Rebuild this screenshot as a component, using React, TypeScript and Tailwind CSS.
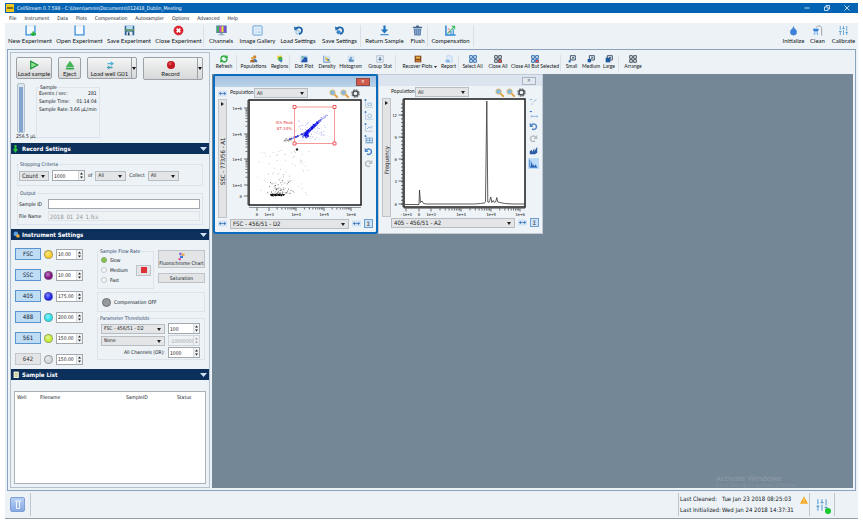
import type { ReactNode } from 'react';
import clsx from 'clsx';
import { Droplet, RefreshCw, SlidersVertical } from 'lucide-react';

const UI = 'font-["DejaVu_Sans_Condensed","DejaVu_Sans",sans-serif]';
const TOOL_FONT = 'font-[Lato,"Open_Sans",sans-serif]';

function Svg({ size = 11, children }: { size?: number; children: ReactNode }) {
  return (
    <svg width={size} height={size} viewBox="0 0 12 12" fill="none" className="shrink-0">
      {children}
    </svg>
  );
}

/* ---------- icons ---------- */

const TrayIcon = ({ plus = false }) => (
  <Svg>
    <rect x="1" y="1" width="10" height="10" fill="#f4faff" stroke="#c3dcf3" strokeWidth=".6" />
    <path d="M1.200 .5v10.300h9.600V.5" stroke="#3f93dc" strokeWidth="1.400" />
    {plus && <path d="M6 9h2V7h2v2h2v2h-2v1H8v-1H6z" fill="#22b03a" />}
  </Svg>
);

const FloppyIcon = () => (
  <Svg>
    <path d="M.8.8h10.400v10.400H.8z" fill="#2a6496" />
    <path d="M2.400.8h7.200v4H2.400z" fill="#b7dcf3" />
    <path d="M.8 5h10.400v1.200H.8z" fill="#7fae4a" />
    <path d="M2.800 7.200h6.400v4H2.800z" fill="#e9eff4" />
    <path d="M4.200 8h1.800v3.200H4.200z" fill="#1c3f5e" />
  </Svg>
);

const CloseCircleIcon = () => (
  <Svg>
    <circle cx="6" cy="6" r="5" fill="#e31f2b" stroke="#b3121c" strokeWidth=".5" />
    <path d="M4 4l4 4M8 4L4 8" stroke="#fff" strokeWidth="1.800" />
  </Svg>
);

const MonitorIcon = () => (
  <Svg>
    <path d="M.3.5h11.400v8.200H.3z" fill="#4c7fae" />
    <path d="M1.200 1.300h2.400v6.600H1.200z" fill="#35b54a" />
    <path d="M3.600 1.300H6v6.600H3.600z" fill="#e03fc8" />
    <path d="M6 1.300h2.400v6.600H6z" fill="#f4dc2c" />
    <path d="M8.400 1.300h2.400v6.600H8.400z" fill="#7d46d8" />
    <path d="M4.800 8.700h2.400v1.300h2v1.200H2.800V10h2z" fill="#8fa6b8" />
  </Svg>
);

const GalleryIcon = () => (
  <Svg>
    <rect x="1" y="1" width="10" height="10" rx="1" fill="#e3effb" stroke="#5d9bd8" />
    <path d="M3.500 3.500h2v2h-2zM6.700 3.500h2v2h-2zM3.500 6.700h2v2h-2z" fill="#c3dcf4" />
    <path d="M6.700 6.700h2v2h-2z" fill="#a2c8ee" />
  </Svg>
);

const SettingsArrowIcon = ({ down = false }) => (
  <Svg>
    <path d="M3 4.500C4.500 1.500 9.500 2 9.800 5.600c.1 2-1.300 3.800-3.300 4.200" stroke="#1f68ad" strokeWidth="2" />
    <path d="M1 1.500l.8 4.800 4.200-2.400z" fill="#1f68ad" />
    <circle cx="5" cy="7.800" r="2" fill={down ? '#2f80c8' : '#dbe9f5'} stroke="#5a96cc" strokeWidth=".6" />
  </Svg>
);

const DownArrowIcon = () => (
  <Svg>
    <path d="M4.800 .5h2.400v4.500h2.800L6 9.300 2 5h2.800z" fill="#1f74c2" />
    <path d="M1.500 9.800h9v1.400h-9z" fill="#4d96d6" />
  </Svg>
);

const BinIcon = () => (
  <Svg>
    <path d="M4.500 .5h3v1.300h-3zM1 1.800h10v1.600H1z" fill="#46658c" />
    <path d="M1.800 3.800h8.400l-.7 7.700H2.500z" fill="#5f83b0" />
    <path d="M4 4.800v5.500M6 4.800v5.500M8 4.800v5.500" stroke="#a9c1de" strokeWidth=".7" />
  </Svg>
);

const CompensationIcon = () => (
  <Svg>
    <path d="M1 .5v10.300h10.500" stroke="#2a86d1" strokeWidth="1.600" />
    <path d="M2.500 9.500L10 2M7.500 1.500h3v3" stroke="#3ebd6a" strokeWidth="1.200" />
    <path d="M6.500 6.500v3.500M9 4.500v5.500" stroke="#2a86d1" strokeWidth="1.200" />
    <path d="M3 4.500h2M4 7.500h1.500" stroke="#e45050" strokeWidth="1" />
  </Svg>
);

const ShowerIcon = () => (
  <Svg>
    <path d="M4.500 3C5.500 .2 10.500 .2 10.500 4v7.500" stroke="#8d9aa6" strokeWidth="1" />
    <path d="M1 4h6.500L6.500 7H2z" fill="#2f7fd8" />
    <path d="M2.500 8v3M4.300 8v2M6 8v3" stroke="#6eaeee" strokeWidth="1" />
  </Svg>
);

const SlidersIcon = ({ size = 11 }) => (
  <SlidersVertical size={size} color="#3d8cc9" strokeWidth={1.600} />
);

const MagnifierIcon = () => (
  <Svg size={9}>
    <path d="M7 7l4 4" stroke="#e0a24a" strokeWidth="2.400" strokeLinecap="round" />
    <circle cx="4.700" cy="4.700" r="3.500" fill="#7fb8e6" stroke="#e6b968" strokeWidth="1.200" />
  </Svg>
);

const GearIcon = () => (
  <Svg size={9}>
    <circle cx="6" cy="6" r="5" stroke="#6b7177" strokeWidth="1.400" strokeDasharray="2.400 1.500" />
    <circle cx="6" cy="6" r="3.400" fill="#f2f5f7" stroke="#4c5157" strokeWidth="2" />
  </Svg>
);

const UndoIcon = ({ redo = false }) => (
  <Svg size={9}>
    <g transform={redo ? 'matrix(-1 0 0 1 12 0)' : undefined}>
      <path d="M3 4.500C5 1.500 10 2.500 10 6.200c0 3-3.500 4.800-6 3" stroke={redo ? '#b4bac0' : '#4a83c6'} strokeWidth="2" />
      <path d="M1 1v5.500h5z" fill={redo ? '#b4bac0' : '#4a83c6'} />
    </g>
  </Svg>
);

const PeopleIcon = () => (
  <Svg size={8}>
    <circle cx="7" cy="3" r="2.500" fill="#c98336" />
    <path d="M3 11c0-4 2-5 4-5s4 1 4 5z" fill="#3b78bd" />
    <circle cx="3.500" cy="5" r="2" fill="#e0a637" />
    <path d="M0 11c0-3 1-4 3.500-4S7 8 7 11z" fill="#b5651f" />
  </Svg>
);

const RegionsIcon = () => (
  <Svg size={8}>
    <path d="M2 1h7v6H2z" fill="#f3d13a" />
    <circle cx="6.500" cy="6" r="3.300" fill="#46ad4c" />
    <path d="M4 8l4 3.500 2-4z" fill="#3d7fd0" />
  </Svg>
);

const DotPlotIcon = () => (
  <Svg size={8}>
    <path d="M1 1h10v10H1z" fill="#a9c9ea" />
    <path d="M1 11L7 3l4 1v7z" fill="#2456b0" />
    <path d="M3 2h2v2H3z" fill="#4aa45a" />
  </Svg>
);

const DensityIcon = () => (
  <Svg size={8}>
    <path d="M1 1h10v10H1z" fill="#cfe2f5" />
    <path d="M1 1v10h10" stroke="#4a79b8" />
    <path d="M3 3l6 3 1 4-5-1z" fill="#f0c22f" />
    <path d="M5 6l4 0 1 4z" fill="#3d88c0" />
  </Svg>
);

const HistogramIcon = () => (
  <Svg size={8}>
    <path d="M1 1h10v10H1z" fill="#cfe0ee" />
    <path d="M3 10V6h2V3h2v4h3v3z" fill="#5d8fc2" />
  </Svg>
);

const StatIcon = () => (
  <Svg size={8}>
    <path d="M1 1h10v10H1z" fill="#e4edf4" stroke="#a2b6c6" />
    <path d="M5 3h2v3h2L6 9 3 6h2z" fill="#5c7c9a" />
  </Svg>
);

const RecoverIcon = () => (
  <Svg size={8}>
    <path d="M1 1h10v10H1z" fill="#8a4b1e" />
    <path d="M3 2.500h6v3H3z" fill="#e9b54a" />
    <path d="M3 7.500h6V10H3z" fill="#c87934" />
  </Svg>
);

const ReportIcon = () => (
  <Svg size={8}>
    <path d="M3 1h6l2 2v8H3z" fill="#dceafa" stroke="#9cc3ea" strokeWidth=".7" />
    <path d="M1 7h6v4H1z" fill="#86b7e8" />
  </Svg>
);

const TilesIcon = ({ color = '#2f6fb4', mark = false }) => (
  <Svg size={8}>
    <path d="M1 1h4v4H1zM7 1h4v4H7zM1 7h4v4H1zM7 7h4v4H7z" stroke={color} strokeWidth="1.500" />
    {mark && <path d="M7 7l4.500 4.500M11.500 7L7 11.500" stroke="#e23434" strokeWidth="1.500" />}
  </Svg>
);

const ResizeIcon = ({ fill = 5 }) => (
  <Svg size={8}>
    <path d="M3.500 1H11v6.500H3.500z" stroke="#27405c" strokeWidth="1.300" />
    <rect x="1" y={11 - fill} width={fill} height={fill} fill="#1f5c9f" />
    <path d="M5 6.500l3.500-3M8.500 5.500v-2H6" stroke="#27405c" />
  </Svg>
);

const AxisToolIcon = ({ kind = 0 }) => (
  <Svg size={9}>
    <path d="M2 4v7h10" stroke="#a9c2dc" strokeWidth="1" />
    <path d="M.5 1.500h3M2 0v3" stroke="#3d82ca" strokeWidth="1.200" />
    {kind === 0 && <path d="M5 5.500h5v3H5z" stroke="#8fb0d2" />}
    {kind === 1 && <circle cx="7.500" cy="6.500" r="2.500" stroke="#8fb0d2" />}
    {kind === 2 && <path d="M4 8l3-3 2 2 2-3" stroke="#6d9fd3" />}
    {kind === 3 && <path d="M3.500 4h8v6h-8zM7.500 4v6M3.500 7h8" stroke="#5d92cb" />}
  </Svg>
);

const ArrowsIcon = () => (
  <svg width="9" height="7" viewBox="0 0 12 8" className="shrink-0">
    <rect width="12" height="8" fill="#d3e3f4" />
    <path d="M1 4l3-2v4zM11 4L8 2v4zM4 3.500h4v1H4z" fill="#3c76bb" />
  </svg>
);

/* ---------- form bits ---------- */

type SelectProps = { label: string; value: string; className?: string; text?: string };

function Select({ label, value, className, text = 'text-[5px]' }: SelectProps) {
  return (
    <div className={clsx('relative h-[10px] shrink-0', className)}>
      <select
        aria-label={label}
        className={clsx('block h-full w-full appearance-none border border-[#b9bdc1] bg-[#e3e5e7] pr-2 pl-[2px] leading-none text-[#222]', text)}
      >
        <option>{value}</option>
      </select>
      <svg width="4" height="3" viewBox="0 0 4 3" className="pointer-events-none absolute top-1 right-1">
        <path d="M0 0h4L2 3z" fill="#222" />
      </svg>
    </div>
  );
}

type SpinProps = { label: string; value: string; className?: string; disabled?: boolean };

function Spin({ label, value, className, disabled }: SpinProps) {
  return (
    <div className={clsx('flex h-[11px] shrink-0 border', disabled ? 'border-[#d0d5d9] bg-[#eef2f4]' : 'border-[#a3a9af] bg-white', className)}>
      <input
        aria-label={label}
        defaultValue={value}
        disabled={disabled}
        className={clsx('w-0 flex-1 pl-[1px] text-[5px] leading-none', disabled ? 'text-[#9ba1a6]' : 'text-[#222]')}
      />
      <button aria-label={`Step ${label}`} className="flex w-[6px] items-center justify-center border-l border-[#d5d8db] bg-[#f0f1f2]">
        <svg width="5" height="7" viewBox="0 0 5 7">
          <path d="M1 2.500h3L2.500 .5zM1 4.500h3L2.500 6.500z" fill={disabled ? '#9ba1a6' : '#222'} />
        </svg>
      </button>
    </div>
  );
}

function Group({ title, className, children }: { title: string; className?: string; children: ReactNode }) {
  return (
    <fieldset className={clsx('min-w-0 border border-[#dde3e8]', className)}>
      <legend className="ml-[1px] px-[1px] text-[5px] leading-[6px] text-[#2b4569]">{title}</legend>
      {children}
    </fieldset>
  );
}

function SectionHeader({ title, icon }: { title: string; icon: ReactNode }) {
  return (
    <h2 className="flex h-[11px] items-center bg-[#0c2f5c] px-[2px] text-white">
      <span className="flex w-[7px] items-center">{icon}</span>
      <span className="ml-[2px] text-[6px] leading-none font-bold">{title}</span>
      <svg width="7" height="4" viewBox="0 0 7 4" className="ml-auto">
        <path d="M0 0h7L3.500 4z" fill="#cfe0f2" />
      </svg>
    </h2>
  );
}

const BEVEL = 'rounded-[2px] border border-[#9ba1a6] bg-linear-to-b from-[#f4f5f5] to-[#d6d8d9] text-[#1c1c1c]';

/* ---------- toolbars ---------- */

type Tool = { label: string; width: string; icon: ReactNode; sep?: boolean; menu?: boolean };

const mainTools: Tool[] = [
  { label: 'New Experiment', width: 'w-[50px]', icon: <TrayIcon plus /> },
  { label: 'Open Experiment', width: 'w-[49px]', icon: <TrayIcon /> },
  { label: 'Save Experiment', width: 'w-[50px]', icon: <FloppyIcon /> },
  { label: 'Close Experiment', width: 'w-[50px]', icon: <CloseCircleIcon />, sep: true },
  { label: 'Channels', width: 'w-[34px]', icon: <MonitorIcon /> },
  { label: 'Image Gallery', width: 'w-[39px]', icon: <GalleryIcon /> },
  { label: 'Load Settings', width: 'w-[42px]', icon: <SettingsArrowIcon /> },
  { label: 'Save Settings', width: 'w-[42px]', icon: <SettingsArrowIcon down />, sep: true },
  { label: 'Return Sample', width: 'w-[47px]', icon: <DownArrowIcon /> },
  { label: 'Flush', width: 'w-[20px]', icon: <BinIcon />, sep: true },
  { label: 'Compensation', width: 'w-[46px]', icon: <CompensationIcon />, sep: true },
];

const sideTools: Tool[] = [
  { label: 'Initialize', width: 'w-[25px]', icon: <Droplet size={11} color="#3d7fcc" fill="#3d82d8" strokeWidth={1} /> },
  { label: 'Clean', width: 'w-[23px]', icon: <ShowerIcon /> },
  { label: 'Calibrate', width: 'w-[29px]', icon: <SlidersIcon /> },
];

const plotTools: Tool[] = [
  { label: 'Refresh', width: 'w-[25px]', icon: <RefreshCw size={8} color="#2fae3e" strokeWidth={4} />, sep: true },
  { label: 'Populations', width: 'w-[33px]', icon: <PeopleIcon /> },
  { label: 'Regions', width: 'w-[20px]', icon: <RegionsIcon />, sep: true },
  { label: 'Dot Plot', width: 'w-[28px]', icon: <DotPlotIcon /> },
  { label: 'Density', width: 'w-[18px]', icon: <DensityIcon /> },
  { label: 'Histogram', width: 'w-[29px]', icon: <HistogramIcon /> },
  { label: 'Group Stat', width: 'w-[31px]', icon: <StatIcon />, sep: true },
  { label: 'Recover Plots', width: 'w-[43px]', icon: <RecoverIcon />, menu: true },
  { label: 'Report', width: 'w-[20px]', icon: <ReportIcon />, sep: true },
  { label: 'Select All', width: 'w-[27px]', icon: <TilesIcon /> },
  { label: 'Close All', width: 'w-[24px]', icon: <TilesIcon color="#4a5561" mark /> },
  { label: 'Close All But Selected', width: 'w-[51px]', icon: <TilesIcon mark />, sep: true },
  { label: 'Small', width: 'w-[21px]', icon: <ResizeIcon fill={3} /> },
  { label: 'Medium', width: 'w-[18px]', icon: <ResizeIcon fill={5} /> },
  { label: 'Large', width: 'w-[19px]', icon: <ResizeIcon fill={7} />, sep: true },
  { label: 'Arrange', width: 'w-[28px]', icon: <TilesIcon color="#4a5561" /> },
];

function ToolButton({ tool, text, gap }: { tool: Tool; text: string; gap: string }) {
  return (
    <button
      className={clsx(
        'flex shrink-0 flex-col items-center leading-none whitespace-nowrap text-[#0e1620]',
        TOOL_FONT, tool.width, text, gap,
        tool.sep && 'border-r border-[#d8dfe5]',
      )}
    >
      {tool.icon}
      <span className="relative">
        {tool.label}
        {tool.menu && (
          <svg width="3" height="2" viewBox="0 0 3 2" className="absolute top-[2px] left-full ml-[2px]">
            <path d="M0 0h3L1.500 2z" fill="#222" />
          </svg>
        )}
      </span>
    </button>
  );
}

/* ---------- plots ---------- */

function rng(seed: number) {
  let s = seed;
  return () => {
    s = (s * 16807) % 2147483647;
    return s / 2147483647;
  };
}

const rand = rng(4217);
const gauss = () => rand() + rand() + rand() - 1.5;

type Dot = { x: number; y: number; color: string };
const dots: Dot[] = [];

// in-gate diagonal population
for (let i = 0; i < 300; i++) {
  const t = gauss() * 8;
  dots.push({ x: 84 + t, y: 29 - t * 0.9 + gauss() * 1.6, color: '#1414e6' });
}
for (let i = 0; i < 120; i++) {
  dots.push({ x: 79 + gauss() * 2.2, y: 35 + gauss() * 3, color: '#1414e6' });
}
for (let i = 0; i < 70; i++) {
  const t = rand() * 16;
  dots.push({ x: 62 + t, y: 40 - t * 0.4 + gauss(), color: i % 2 ? '#1414e6' : '#7a80d0' });
}
for (let i = 0; i < 30; i++) {
  const t = rand() * 12;
  dots.push({ x: 88 + t, y: 25 - t * 0.8 + gauss(), color: '#8f93e8' });
}
for (let i = 0; i < 60; i++) {
  dots.push({ x: 84 + gauss() * 14, y: 31 + gauss() * 11, color: '#a5a8ec' });
}
for (let i = 0; i < 22; i++) {
  dots.push({ x: 55 + rand() * 9, y: 42 - rand() * 3, color: '#777' });
}
// debris
for (let i = 0; i < 90; i++) {
  dots.push({ x: 43 + rand() * 14, y: 95.5 + gauss(), color: '#000' });
}
for (let i = 0; i < 80; i++) {
  dots.push({ x: 53 + gauss() * 12, y: 94 - rand() * rand() * 22, color: i % 3 ? '#999' : '#333' });
}
for (let i = 0; i < 60; i++) {
  dots.push({ x: 30 + rand() * 52, y: 50 + rand() * 46, color: '#bbb' });
}

type Mark = { at: number; label: string };

function logTicks(marks: Mark[]) {
  const out: number[] = [];
  for (let i = 0; i < marks.length - 1; i++) {
    const a = marks[i].at;
    const b = marks[i + 1].at;
    for (let n = 2; n < 10; n++) out.push(a + (b - a) * Math.log10(n));
  }
  return out;
}

const AXIS_TEXT = 'fill-[#222] text-[4px] font-["DejaVu_Sans_Mono",monospace]';

function AxisLabels({ xs, ys, baseline, right }: { xs: Mark[]; ys: Mark[]; baseline: number; right: number }) {
  return (
    <g className={AXIS_TEXT}>
      {xs.map((m) => (
        <text key={m.label} x={m.at} y={baseline} textAnchor="middle">{m.label}</text>
      ))}
      {ys.map((m) => (
        <text key={m.label} x={right} y={m.at + 2} textAnchor="end">{m.label}</text>
      ))}
    </g>
  );
}

function ScatterPlot() {
  const xs = [{ at: 30, label: '0' }, { at: 42, label: '1e+3' }, { at: 69, label: '1e+4' }, { at: 97, label: '1e+5' }, { at: 124, label: '1e+6' }];
  const ys = [{ at: 97, label: '0' }, { at: 86, label: '1e+3' }, { at: 60, label: '1e+4' }, { at: 35, label: '1e+5' }, { at: 9, label: '1e+6' }];
  return (
    <svg width="136" height="119" viewBox="0 0 136 119" role="img" aria-label="Scatter plot">
      <rect x="22" y="1" width="112" height="105" fill="#fff" stroke="#1a1a1a" strokeWidth="1.500" />
      <path d="M20.500 1v105M22 108.500h112" stroke="#555" strokeWidth=".6" />
      <g stroke="#333" strokeWidth=".7">
        {ys.map((m) => <path key={m.label} d={`M17 ${m.at}h4`} />)}
        {logTicks(ys.slice(1)).map((y) => <path key={y} d={`M18.500 ${y}h2`} />)}
        {xs.map((m) => <path key={m.label} d={`M${m.at} 108.500v3.500`} />)}
        {logTicks(xs.slice(1)).map((x) => <path key={x} d={`M${x} 108.500v2`} />)}
      </g>
      {dots.map((d, i) => (
        <rect key={i} x={d.x} y={d.y} width=".8" height=".8" fill={d.color} />
      ))}
      <circle cx="70" cy="50.500" r="1.200" fill="#222" />
      <g fill="none" stroke="#f27f7d">
        <path d="M67.500 8h40v36.500h-40z" strokeWidth=".8" />
        <path d="M66 6.500h3v3h-3zM106 6.500h3v3h-3zM66 43h3v3h-3zM106 43h3v3h-3z" fill="#fff" stroke="#e8383b" strokeWidth=".8" />
      </g>
      <g className='fill-[#e8383b] text-[4px] font-["DejaVu_Sans",sans-serif]' textAnchor="end">
        <text x="66" y="25">4th Peak</text>
        <text x="65" y="31">87.34%</text>
      </g>
      <AxisLabels xs={xs} ys={ys} baseline={117} right={15} />
    </svg>
  );
}

function HistogramPlot() {
  const xs = [{ at: 15, label: '-1e+3' }, { at: 28, label: '0' }, { at: 40, label: '1e+3' }, { at: 70, label: '1e+4' }, { at: 100, label: '1e+5' }, { at: 129, label: '1e+6' }];
  const ys = [{ at: 106, label: '0' }, { at: 83, label: '3' }, { at: 61, label: '6' }, { at: 39, label: '9' }, { at: 17, label: '12' }];
  const minor = Array.from({ length: 28 }, (_, i) => 106 - i * 3.7);
  return (
    <svg width="137" height="119" viewBox="0 0 137 119" role="img" aria-label="Histogram">
      <rect x="13" y="1" width="121" height="108" fill="#fff" stroke="#1a1a1a" strokeWidth="1.500" />
      <path d="M11.500 1v108M13 110.500h121" stroke="#555" strokeWidth=".6" />
      <g stroke="#333" strokeWidth=".7">
        {ys.map((m) => <path key={m.label} d={`M7.500 ${m.at}h5`} />)}
        {minor.map((y) => <path key={y} d={`M10 ${y}h2`} />)}
        {xs.map((m) => <path key={m.label} d={`M${m.at} 110.500v3`} />)}
        {logTicks(xs.slice(2)).map((x) => <path key={x} d={`M${x} 110.500v2`} />)}
      </g>
      <path
        d="M14 106.500h14l.5-14.500 1 12.500 1.500-1.500 1.500 2.500 3 .5h48l6-.5 4-.5 1-1.500L95.800 3l1 101 1 .5 1-2 1-3.500 1 5.500 1.500-2 1 2 1.500-1 1-4 1 4.500 2 .5 5 1 8 .5h12"
        fill="none"
        stroke="#333"
        strokeWidth=".8"
      />
      <AxisLabels xs={xs} ys={ys} baseline={118} right={6} />
    </svg>
  );
}

type PlotWindowProps = { active?: boolean; xParam: string; yParam: string; tools: ReactNode; className: string; children: ReactNode };

function PlotWindow({ active, xParam, yParam, tools, className, children }: PlotWindowProps) {
  return (
    <section
      className={clsx(
        'absolute flex flex-col bg-[#eef3f7]',
        active ? 'rounded-[3px] border-2 border-[#0b6cbd]' : 'border border-[#c3ccd6]',
        className,
      )}
    >
      <header className={clsx('flex h-[11px] shrink-0 items-center justify-end px-[6px]', active ? 'bg-linear-to-b from-[#a3c1e0] to-[#bdd3ea]' : 'bg-[#dce5ef]')}>
        <button
          aria-label="Close plot"
          className={clsx(
            'flex h-[8px] w-[14px] items-center justify-center border text-[5px] leading-none',
            active ? 'border-[#8c4a44] bg-[#cf5a4c] text-white' : 'border-[#a9b4c0] bg-[#e2e9f1] text-[#5a6470]',
          )}
        >
          ✕
        </button>
      </header>
      <div className="flex h-[12px] items-center px-[3px] text-[5px] text-[#222]">
        {active ? <ArrowsIcon /> : null}
        <span className={clsx('w-6', TOOL_FONT, active ? 'ml-[3px]' : 'ml-[9px]')}>Population</span>
        <Select label="Population" value="All" className="w-[54px]" />
        <div className="ml-auto flex items-center gap-[2px] pr-[13px]">
          <MagnifierIcon />
          <MagnifierIcon />
          <GearIcon />
        </div>
      </div>
      <div className="flex pl-[3px]">
        <button className="flex w-[9px] flex-col items-center border border-[#c0c4c8] bg-[#e1e3e5] text-[#222]">
          <svg width="3" height="4" viewBox="0 0 3 4" className="mt-[2px]"><path d="M0 0v4l3-2z" fill="#222" /></svg>
          <span className="flex flex-1 rotate-180 items-center justify-center text-[6px] leading-none whitespace-nowrap [writing-mode:vertical-rl]">{yParam}</span>
        </button>
        {children}
        <div className="flex w-[11px] flex-col items-center gap-[3px]">{tools}</div>
      </div>
      <div className="flex h-[11px] items-center gap-[3px] px-[3px]">
        {active ? <ArrowsIcon /> : <span className="w-[6px]" />}
        <Select label="X parameter" value={xParam} className="flex-1" text="text-[6px]" />
        <ArrowsIcon />
        <button aria-label="Statistics" className="flex size-[9px] items-center justify-center border border-[#6e9fd0] bg-[#cfe3f6] text-[6px] leading-none text-[#333]">Σ</button>
      </div>
    </section>
  );
}

/* ---------- left panel ---------- */

const lasers = [
  { name: 'FSC', value: '10.00', led: 'bg-[#f7cd22]', on: true },
  { name: 'SSC', value: '10.00', led: 'bg-[#7d0a80]', on: true },
  { name: '405', value: '175.00', led: 'bg-[#1620f0]', on: true },
  { name: '488', value: '200.00', led: 'bg-[#27e3ee]', on: true },
  { name: '561', value: '150.00', led: 'bg-[#c5ee2e]', on: true },
  { name: '642', value: '150.00', led: 'bg-[#d3d5d7]', on: false },
];

const SplitArrow = () => (
  <span className="flex w-[5px] items-center justify-center border-l border-[#9ba1a6]">
    <svg width="4" height="3" viewBox="0 0 4 3"><path d="M0 0h4L2 3z" fill="#111" /></svg>
  </span>
);

function SamplePanel() {
  return (
    <div className="h-[90px] px-[5px] pt-1 text-[6px] leading-none">
      <div className={clsx('flex whitespace-nowrap', TOOL_FONT)}>
        <button className={clsx(BEVEL, 'flex h-[22px] w-[36px] flex-col items-center justify-center gap-[1px]')}>
          <Svg size={10}><path d="M2 1.500v9L10.500 6z" fill="#8fe08a" stroke="#16903a" strokeWidth="1.300" /></Svg>
          Load sample
        </button>
        <button className={clsx(BEVEL, 'ml-[6px] flex h-[22px] w-[23px] flex-col items-center justify-center gap-[1px]')}>
          <Svg size={10}><path d="M1.500 8L6 1.500 10.500 8zM1.500 9.500h9v1.500h-9z" fill="#3cba4c" stroke="#16903a" strokeWidth=".5" /></Svg>
          Eject
        </button>
        <button className={clsx(BEVEL, 'ml-[6px] flex h-[22px] w-[50px]')}>
          <span className="flex flex-1 flex-col items-center gap-[1px] self-center">
            <Svg size={10}>
              <path d="M3 3.500h4v-2l4 3-4 2.500v-2H3z" fill="#4fb2d8" />
              <path d="M9 8H5V6.500L2 9l3 2.500V10h4z" fill="#3e9bb0" />
            </Svg>
            Load well G01
          </span>
          <SplitArrow />
        </button>
        <button className={clsx(BEVEL, 'ml-[6px] flex h-[23px] w-[60px]')}>
          <span className="flex flex-1 flex-col items-center gap-[1px] self-center">
            <Svg size={10}><circle cx="6" cy="6" r="4.800" fill="#c31821" /><circle cx="5" cy="4.500" r="2" fill="#de4b50" /></Svg>
            Record
          </span>
          <SplitArrow />
        </button>
      </div>
      <div className="mt-[3px] flex">
        <div className="flex w-[18px] flex-col items-start">
          <div className="ml-[1px] h-[50px] w-[8px] rounded-[2px] border border-[#b4c2d0] bg-[#dfe7ee] px-[1px] pt-[3px]">
            <div className="h-full bg-[#84a5cb]" />
          </div>
          <span className="mt-[1px] text-[5px] whitespace-nowrap">256.5 µL</span>
        </div>
        <fieldset className="mt-[1px] ml-[2px] h-[54px] w-[60px] border border-[#dde3e8] px-[2px] text-[5px] whitespace-nowrap">
          <legend className="px-[1px] leading-[6px]">Sample</legend>
          <dl className="grid grid-cols-[auto_auto] gap-y-[3px] pt-[1px] leading-[5px]">
            <dt>Events / sec:</dt><dd className="text-right">281</dd>
            <dt>Sample Time:</dt><dd className="text-right">01:14:04</dd>
            <dt>Sample Rate:</dt><dd className="text-right">3.66 µL/min</dd>
          </dl>
        </fieldset>
      </div>
    </div>
  );
}

function RecordSettings() {
  return (
    <div className="flex h-[75px] flex-col gap-1 px-[6px] pt-[7px] text-[5px] leading-none">
      <Group title="Stopping Criteria" className="h-[25px]">
        <div className="flex items-center gap-[3px] pt-[3px] pl-[1px]">
          <Select label="Criteria" value="Count" className="w-[30px]" text="text-[6px]" />
          <Spin label="Count" value="1000" className="w-[33px]" />
          <span>of</span>
          <Select label="Population" value="All" className="w-[31px]" />
          <span>Collect</span>
          <Select label="Collect" value="All" className="w-[31px]" />
        </div>
      </Group>
      <Group title="Output" className="h-[35px]">
        <div className="grid grid-cols-[25px_1fr] items-center gap-x-1 gap-y-[2px] pt-[3px] pr-[2px] pl-[1px]">
          <label htmlFor="sample-id">Sample ID</label>
          <input id="sample-id" className="h-[10px] border border-[#a3a9af] bg-white px-[2px]" />
          <label htmlFor="file-name">File Name</label>
          <input id="file-name" disabled defaultValue="2018_01_24_1.fcs" className="h-[10px] border border-[#dde3e8] bg-[#eef2f4] px-[1px] text-[6px] text-[#8f959a]" />
        </div>
      </Group>
    </div>
  );
}

function InstrumentSettings() {
  return (
    <div className="flex h-[129px] gap-[14px] px-1 pt-[8px] text-[5px] leading-none">
      <ul className="flex flex-col gap-[9px]">
        {lasers.map((l) => (
          <li key={l.name} className="flex h-[12px] items-center gap-[3px]">
            <button className={clsx('h-[12px] w-[26px] border text-[6px]', l.on ? 'border-[#5b95cf] bg-[#bfdcf5] text-[#123]' : 'border-[#c3c7cb] bg-[#e2e4e6] text-[#333]')}>
              {l.name}
            </button>
            <span className={clsx('size-[9px] rounded-full border border-[#777]/60 bg-radial-[at_40%_35%] from-white/50 to-transparent to-60%', l.led)} />
            <Spin label={`${l.name} power`} value={l.value} className="w-[27px]" />
          </li>
        ))}
      </ul>
      <div className="flex flex-1 flex-col">
        <div className="flex gap-1">
          <Group title="Sample Flow Rate" className="h-[41px] w-[57px]">
            <div className="flex items-center gap-2 pt-[3px] pl-[3px]">
              <div className="flex flex-col gap-1">
                {['Slow', 'Medium', 'Fast'].map((speed, i) => (
                  <label key={speed} className="flex items-center gap-[3px]">
                    <input
                      type="radio"
                      name="flow"
                      defaultChecked={i === 0}
                      className="size-[6px] appearance-none rounded-full border border-[#c3c9ce] bg-[#f4f6f7] checked:border-[#86a868] checked:bg-[#84c44f]"
                    />
                    {speed}
                  </label>
                ))}
              </div>
              <button aria-label="Stop flow" className="flex h-[11px] w-[15px] items-center justify-center border border-[#c0c4c8] bg-[#e2e4e6]">
                <span className="size-[6px] bg-[#dd2f34]" />
              </button>
            </div>
          </Group>
          <div className="flex flex-1 flex-col gap-[5px] pt-[2px]">
            <button className="flex h-[18px] flex-col items-center justify-center border border-[#c0c4c8] bg-[#e2e4e6] whitespace-nowrap">
              <Svg size={9}>
                <path d="M3 1h3v3H3z" fill="#8c5fe0" />
                <path d="M6 2h4v3H6z" fill="#f0a63a" />
                <path d="M4 5h4v3H4z" fill="#3b7be0" />
                <path d="M2 8h3v3H2z" fill="#e0489a" />
              </Svg>
              Fluorochrome Chart
            </button>
            <button className="h-[10px] border border-[#c0c4c8] bg-[#e2e4e6]">Saturation</button>
          </div>
        </div>
        <div className="mt-[3px] flex h-[20px] items-center gap-[3px] border border-[#dde3e8] pl-1">
          <span className="size-[9px] rounded-full border border-[#6d7175] bg-[#96999c]" />
          Compensation OFF
        </div>
        <Group title="Parameter Thresholds" className="mt-[3px] h-[45px]">
          <div className="grid grid-cols-[64px_32px] items-center gap-x-[3px] gap-y-[1px] pt-[2px] pl-[3px]">
            <Select label="First threshold parameter" value="FSC - 456/51 - D2" />
            <Spin label="First threshold" value="100" />
            <Select label="Second threshold parameter" value="None" />
            <Spin label="Second threshold" value="-10000000" disabled />
            <span className="text-right">All Channels (OR):</span>
            <Spin label="All channels threshold" value="1000" />
          </div>
        </Group>
      </div>
    </div>
  );
}

function SampleList() {
  return (
    <div className="flex flex-1 flex-col px-[3px] pt-[11px] pb-[3px]">
      <div className="flex-1 border border-[#a9b2bb] bg-white">
        <table className="w-full table-fixed text-left text-[5px] leading-none">
          <thead>
            <tr>
              <th className="w-[24px] px-[2px] pt-[3px] font-normal">Well</th>
              <th className="px-[1px] pt-[3px] font-normal">Filename</th>
              <th className="w-[51px] px-[1px] pt-[3px] font-normal">SampleID</th>
              <th className="w-[29px] px-[1px] pt-[3px] font-normal">Status</th>
            </tr>
          </thead>
          <tbody />
        </table>
      </div>
    </div>
  );
}

const menus = ['File', 'Instrument', 'Data', 'Plots', 'Compensation', 'Autosampler', 'Options', 'Advanced', 'Help'];

export default function App() {
  return (
    <div className={clsx('flex min-h-screen flex-col bg-white px-[5px] pt-[3px] pb-[5px] text-[#10181f]', UI)}>
      <header className="flex h-[10px] items-center bg-[#0563b3] pl-[1px] text-[5px] leading-none text-white">
        <svg width="8" height="8" viewBox="0 0 8 8" className="mr-[3px]">
          <rect width="8" height="8" fill="#f2c81e" />
          <path d="M1 5l1-2 1 2 1-2 1 2 1-2 1 2" fill="none" stroke="#4a4420" strokeWidth=".8" />
        </svg>
        <h1>CellStream 0.7.598 - C:\Users\amnis\Documents\012418_Dublin_Meeting</h1>
        <div className="ml-auto flex gap-[14px] pr-[8px]">
          <button aria-label="Minimize"><Svg size={6}><path d="M1 6h10" stroke="#fff" strokeWidth="1.500" /></Svg></button>
          <button aria-label="Restore"><Svg size={6}><path d="M1 4h7v7H1zM4 4V1h7v7H8" stroke="#fff" strokeWidth="1.500" /></Svg></button>
          <button aria-label="Close"><Svg size={6}><path d="M1 1l10 10M11 1L1 11" stroke="#fff" strokeWidth="1.500" /></Svg></button>
        </div>
      </header>
      <nav className="flex h-[10px] items-center gap-2 pl-1 text-[5px] leading-none">
        {menus.map((m) => <button key={m}>{m}</button>)}
      </nav>

      <div className="flex flex-1 flex-col border-b border-[#8f9fae] bg-[#edf2f6]">
        <div className="flex h-[26px] py-[2px]">
          {mainTools.map((t) => <ToolButton key={t.label} tool={t} text="text-[6px]" gap="gap-[2px]" />)}
          <div className="ml-auto flex">
            {sideTools.map((t) => <ToolButton key={t.label} tool={t} text="text-[6px]" gap="gap-[2px]" />)}
          </div>
        </div>

        <main className="mx-[2px] flex flex-1 gap-[2px] border border-[#8ba3bd] p-[2px]">
          <aside className="flex w-[200px] shrink-0 flex-col border border-[#b3c0cd]">
            <SamplePanel />
            <SectionHeader title="Record Settings" icon={<svg width="5" height="8" viewBox="0 0 5 8"><path d="M1.500 0h2v4H5L2.500 8 0 4h1.500z" fill="#2bc43a" /></svg>} />
            <RecordSettings />
            <SectionHeader
              title="Instrument Settings"
              icon={<Svg size={7}><circle cx="5" cy="5" r="4" fill="#5e9fe0" /><circle cx="8.500" cy="8.500" r="3" fill="#f0b13a" /></Svg>}
            />
            <InstrumentSettings />
            <SectionHeader
              title="Sample List"
              icon={<Svg size={7}><path d="M1 1h9v11H1z" fill="#f5f1d8" /><path d="M3 4h5M3 6.500h5M3 9h5" stroke="#8aa45a" /></Svg>}
            />
            <SampleList />
          </aside>

          <div className="flex min-w-0 flex-1 flex-col">
            <div className="flex h-[22px] shrink-0 py-[3px]">
              {plotTools.map((t) => <ToolButton key={t.label} tool={t} text="text-[5px]" gap="gap-[1px]" />)}
            </div>
            <div className="relative flex-1 overflow-hidden bg-[#748796]">
              <PlotWindow
                active
                className="top-0 left-[1px] h-[160px] w-[165px]"
                xParam="FSC - 456/51 - D2"
                yParam="SSC - 773/56 - A1"
                tools={
                  <>
                    <AxisToolIcon kind={0} />
                    <AxisToolIcon kind={1} />
                    <AxisToolIcon kind={2} />
                    <AxisToolIcon kind={3} />
                    <UndoIcon />
                    <UndoIcon redo />
                  </>
                }
              >
                <ScatterPlot />
              </PlotWindow>
              <PlotWindow
                className="top-0 left-[166px] h-[160px] w-[165px]"
                xParam="405 - 456/51 - A2"
                yParam="Frequency"
                tools={
                  <>
                    <Svg size={9}><path d="M1 2h3M6 5l4-3M3 8h2" stroke="#8fb4da" strokeWidth="1.300" /></Svg>
                    <Svg size={9}><path d="M1 2h3" stroke="#3d82ca" strokeWidth="1.500" /><path d="M3 8.500h8M3 7v3M11 7v3" stroke="#7aa8d8" /></Svg>
                    <UndoIcon />
                    <UndoIcon redo />
                    <Svg size={9}><path d="M1 11V7l3-2v3l3-5v4l4-6v8l-3 2z" fill="#2c5ea8" /></Svg>
                    <span className="bg-[#bcdcf8] p-[1px]"><Svg size={9}><path d="M1 1v10h10" stroke="#2760b8" /><path d="M2 11l1.500-8 1.500 6 1-2 1 3 2-3 1.500 4z" fill="#2760b8" /></Svg></span>
                  </>
                }
              >
                <HistogramPlot />
              </PlotWindow>
              <div className="absolute right-[36px] bottom-0 w-[101px] font-['Open_Sans',sans-serif] whitespace-nowrap">
                <p className="text-[8px] leading-[9px] text-[#8f9da9]">Activate Windows</p>
                <p className="text-[5px] leading-[6px] text-[#8494a1]">Go to Settings to activate Windows.</p>
              </div>
            </div>
          </div>
        </main>

        <footer className="flex h-[27px] shrink-0 items-center pr-[23px] text-[6px] leading-none">
          <div className="flex h-[23px] w-[26px] items-center justify-center border-r border-[#bcc7d1]">
            <button aria-label="Plate view" className="flex size-[15px] items-center justify-center rounded-[2px] border border-[#7f9fd6] bg-linear-to-b from-[#b9d0f4] to-[#86a9e4]">
              <svg width="8" height="10" viewBox="0 0 8 10"><path d="M1 1h6M2.500 1v7.500h3V1" fill="none" stroke="#f2f7fe" /></svg>
            </button>
          </div>
          <div className="ml-auto flex h-[23px] items-center border-l border-[#bcc7d1] pl-[1px]">
            <dl className="grid grid-cols-[42px_78px] gap-y-[5px] whitespace-nowrap">
              <dt>Last Cleaned:</dt><dd>Tue Jan 23 2018 08:25:03</dd>
              <dt>Last Initialized:</dt><dd>Wed Jan 24 2018 14:37:31</dd>
            </dl>
            <span className="self-start pt-[3px]">
              <Svg size={8}><path d="M6 .5L12 11.500H0z" fill="#f3a81c" /><path d="M6 4v4M6 9v1.200" stroke="#fff" /></Svg>
            </span>
            <div className="ml-[1px] flex h-full w-[26px] items-center justify-center border-x border-[#bcc7d1]">
              <span className="relative">
                <SlidersIcon size={14} />
                <span className="absolute -right-[2px] -bottom-[2px] size-[6px] rounded-full bg-[#18c92b]" />
              </span>
            </div>
          </div>
        </footer>
      </div>
    </div>
  );
}
